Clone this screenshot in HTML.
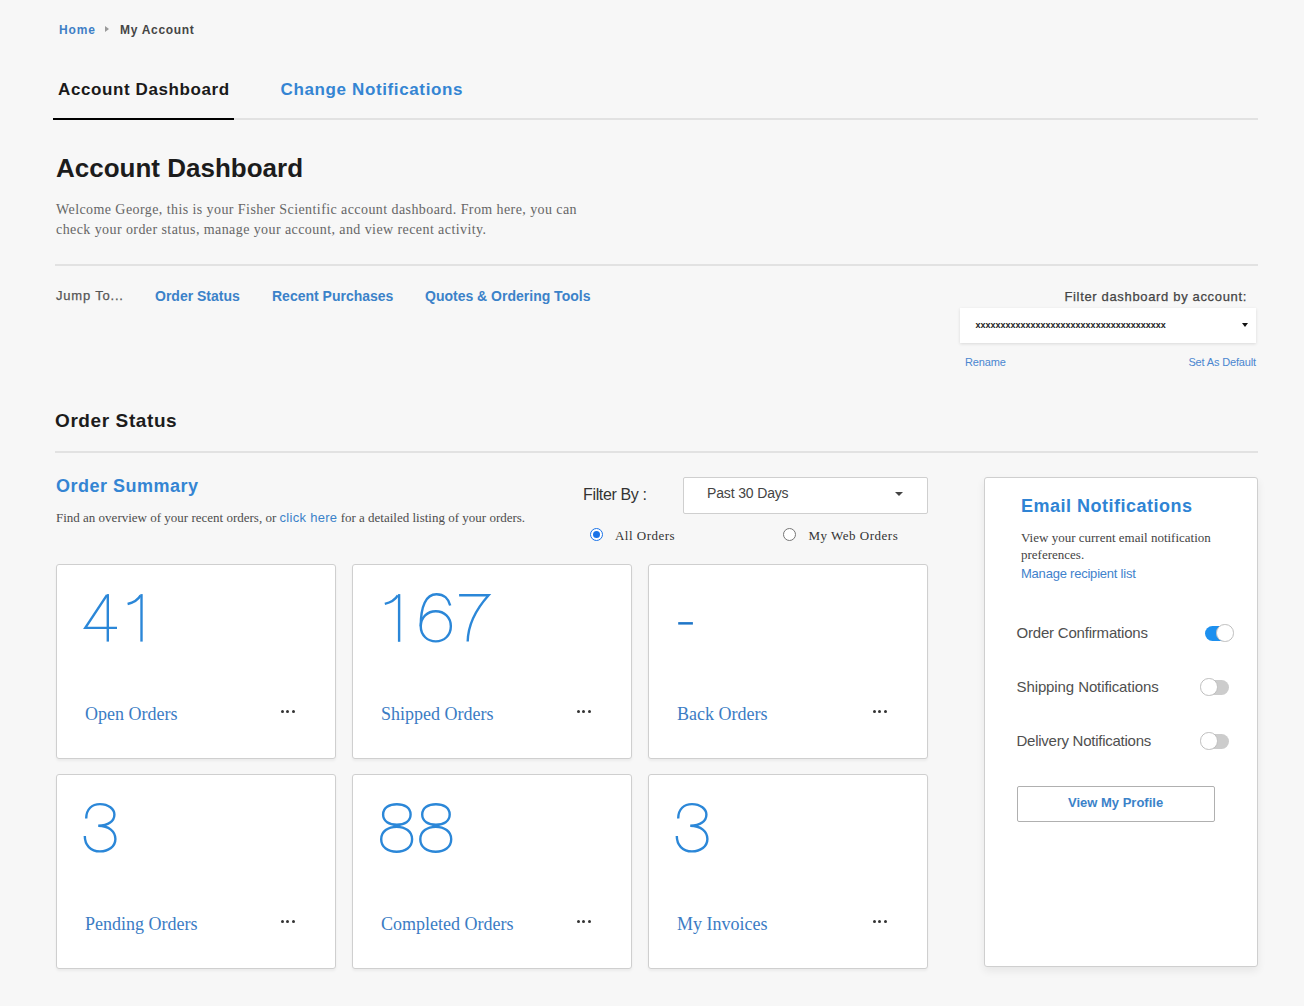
<!DOCTYPE html>
<html><head><meta charset="utf-8">
<style>
*{box-sizing:border-box;margin:0;padding:0}
html,body{width:1304px;height:1006px;overflow:hidden;background:#f7f7f7;font-family:"Liberation Sans",sans-serif;color:#222}
.a{position:absolute;white-space:nowrap;line-height:1}
.serif{font-family:"Liberation Serif",serif}
.line{position:absolute;background:#e2e2e2}
.card{position:absolute;background:#fff;border:1px solid #cfcfcf;border-radius:3px;box-shadow:0 2px 3px rgba(0,0,0,.05);width:280px;height:195px}
.card .lbl{position:absolute;left:28px;top:139.9px;line-height:1;white-space:nowrap;font-family:"Liberation Serif",serif;font-size:18px;color:#3b7cc4}
.card .dots i{position:absolute;top:144.8px;margin-left:-.5px;width:3px;height:3px;border-radius:50%;background:#333}
.tog{position:absolute;width:27px;height:15px;border-radius:8px;background:#cccccc}
.knob{position:absolute;width:17.5px;height:17.5px;border-radius:50%;background:#fff;border:1px solid #bfbfbf}
</style></head><body>
<!-- breadcrumb -->
<div class="a" style="left:59px;top:23.6px;font-size:12px;font-weight:bold;letter-spacing:.9px;color:#3f7fc6">Home</div>
<div class="a" style="left:105px;top:26px;width:0;height:0;border-left:4.5px solid #9a9a9a;border-top:3px solid transparent;border-bottom:3px solid transparent"></div>
<div class="a" style="left:120px;top:23.6px;font-size:12px;font-weight:bold;letter-spacing:.7px;color:#454545">My Account</div>

<!-- tabs -->
<div class="a" style="left:58px;top:81px;font-size:17px;font-weight:bold;letter-spacing:.6px;color:#1a1a1a">Account Dashboard</div>
<div class="a" style="left:280.5px;top:80.5px;font-size:17px;font-weight:bold;letter-spacing:.63px;color:#3485d3">Change Notifications</div>
<div class="line" style="left:234px;top:118px;width:1024px;height:2px;background:#e2e2e2"></div>
<div class="line" style="left:53px;top:118px;width:181px;height:2px;background:#000"></div>

<div class="a" style="left:56px;top:155.4px;font-size:26px;font-weight:bold;color:#1c1c1c">Account Dashboard</div>
<div class="a serif" style="left:56px;top:200.4px;font-size:14px;line-height:20px;letter-spacing:.42px;color:#666">Welcome George, this is your Fisher Scientific account dashboard. From here, you can<br>check your order status, manage your account, and view recent activity.</div>
<div class="line" style="left:55px;top:264px;width:1203px;height:2px"></div>

<!-- jump to -->
<div class="a" style="left:56px;top:289px;font-size:13px;letter-spacing:.8px;color:#555;-webkit-text-stroke:.25px #555">Jump To...</div>
<div class="a" style="left:155px;top:288.6px;font-size:14px;font-weight:bold;color:#3b82c9">Order Status</div>
<div class="a" style="left:272px;top:288.6px;font-size:14px;font-weight:bold;color:#3b82c9">Recent Purchases</div>
<div class="a" style="left:425px;top:288.6px;font-size:14px;font-weight:bold;color:#3b82c9">Quotes &amp; Ordering Tools</div>

<div class="a" style="right:57px;top:289.8px;font-size:13px;letter-spacing:.66px;color:#444;-webkit-text-stroke:.25px #444">Filter dashboard by account:</div>
<div class="a" style="left:960px;top:308px;width:296px;height:35px;background:#fff;box-shadow:0 1px 3px rgba(0,0,0,.12)">
  <span class="a" style="left:15.5px;top:13px;font-size:9px;font-weight:bold;color:#222">xxxxxxxxxxxxxxxxxxxxxxxxxxxxxxxxxxxxxx</span>
  <span class="a" style="left:282px;top:14.5px;width:0;height:0;border-top:4px solid #111;border-left:3px solid transparent;border-right:3px solid transparent"></span>
</div>
<div class="a" style="left:965px;top:356.5px;font-size:11px;letter-spacing:-.15px;color:#4a86d0">Rename</div>
<div class="a" style="right:48px;top:356.5px;font-size:11px;letter-spacing:-.15px;color:#4a86d0">Set As Default</div>

<!-- order status -->
<div class="a" style="left:55px;top:410.7px;font-size:19px;font-weight:bold;letter-spacing:.6px;color:#1c1c1c">Order Status</div>
<div class="line" style="left:55px;top:451px;width:1203px;height:2px"></div>

<div class="a" style="left:56px;top:476.6px;font-size:18px;font-weight:bold;letter-spacing:.5px;color:#3485d3">Order Summary</div>
<div class="a serif" style="left:56px;top:511.1px;font-size:13px;color:#4d4d4d">Find an overview of your recent orders, or <span style="font-family:'Liberation Sans',sans-serif;letter-spacing:.3px;color:#3b82c9">click here</span> for a detailed listing of your orders.</div>

<div class="a" style="left:583px;top:486.9px;font-size:16px;letter-spacing:-.35px;color:#333">Filter By :</div>
<div class="a" style="left:683px;top:477px;width:245px;height:37px;background:#fff;border:1px solid #cfcfcf;border-radius:2px">
  <span class="a" style="left:23px;top:8.25px;font-size:14px;letter-spacing:-.15px;color:#444">Past 30 Days</span>
  <span class="a" style="left:210.5px;top:14px;width:0;height:0;border-top:4px solid #444;border-left:4px solid transparent;border-right:4px solid transparent"></span>
</div>
<div class="a" style="left:590px;top:528px;width:13px;height:13px;border-radius:50%;border:1.5px solid #1a73e8;background:#fff"><i style="position:absolute;left:1.5px;top:1.5px;width:7px;height:7px;border-radius:50%;background:#1a73e8"></i></div>
<div class="a serif" style="left:615px;top:528.9px;font-size:13px;color:#333;letter-spacing:.48px">All Orders</div>
<div class="a" style="left:783px;top:528px;width:13px;height:13px;border-radius:50%;border:1px solid #767676;background:#fff"></div>
<div class="a serif" style="left:808.5px;top:529.1px;font-size:13px;color:#333;letter-spacing:.5px">My Web Orders</div>

<!-- cards -->
<div class="card" style="left:56px;top:564px"><div class="lbl">Open Orders</div><div class="dots"><i style="left:224.8px"></i><i style="left:229.9px"></i><i style="left:235px"></i></div></div>
<div class="card" style="left:352px;top:564px"><div class="lbl">Shipped Orders</div><div class="dots"><i style="left:224.8px"></i><i style="left:229.9px"></i><i style="left:235px"></i></div></div>
<div class="card" style="left:648px;top:564px"><div class="lbl">Back Orders</div><div class="dots"><i style="left:224.8px"></i><i style="left:229.9px"></i><i style="left:235px"></i></div></div>
<div class="card" style="left:56px;top:774px"><div class="lbl">Pending Orders</div><div class="dots"><i style="left:224.8px"></i><i style="left:229.9px"></i><i style="left:235px"></i></div></div>
<div class="card" style="left:352px;top:774px"><div class="lbl">Completed Orders</div><div class="dots"><i style="left:224.8px"></i><i style="left:229.9px"></i><i style="left:235px"></i></div></div>
<div class="card" style="left:648px;top:774px"><div class="lbl">My Invoices</div><div class="dots"><i style="left:224.8px"></i><i style="left:229.9px"></i><i style="left:235px"></i></div></div>

<!-- big numbers -->
<svg class="a" style="left:0;top:0" width="1304" height="1006" viewBox="0 0 1304 1006">
 <g fill="none" stroke="#2b87d8" stroke-width="2.4" stroke-linecap="butt" stroke-linejoin="miter">
  <path d="M107.8 594.1 V641.6"/>
  <path d="M106.9 595.2 L85.3 627.9 H117"/>
  <path d="M127.6 604 C133.5 602.6 138 600 140.6 595.4"/><path d="M141.5 594.1 V641.6"/>
  <path d="M384.8 603.9 C390.7 602.5 395.2 599.9 397.8 595.4"/><path d="M399.1 594.1 V641.8"/>
  <path d="M420.75 626.35 C420.75 617.32 427.49 611.30 435.80 611.30 C444.11 611.30 450.85 617.32 450.85 626.35 C450.85 635.38 444.11 641.40 435.80 641.40 C427.49 641.40 420.75 635.38 420.75 626.35 Z"/>
  <path d="M420.75 626.35 C420.7 606 426 594.3 436.5 594.3 C444 594.3 448.8 599 450.2 605.6"/>
  <path d="M459.1 595.2 H488.6 C478 607 468 622 467.7 641.6"/>
  <rect x="678.2" y="622.1" width="14.7" height="2.5" fill="#1f76c8" stroke="none"/>
  <path d="M86.2 818.5 C86.2 809 92 804.1 100 804.1 C108.5 804.1 114.4 809 114.4 814.5 C114.4 821 108.5 825.8 98.2 825.8 C109 825.8 115.4 831.5 115.4 839 C115.4 846.5 108.5 851.4 100 851.4 C90.5 851.4 84.8 845 84.8 836"/>
  <path transform="translate(592 0)" d="M86.2 818.5 C86.2 809 92 804.1 100 804.1 C108.5 804.1 114.4 809 114.4 814.5 C114.4 821 108.5 825.8 98.2 825.8 C109 825.8 115.4 831.5 115.4 839 C115.4 846.5 108.5 851.4 100 851.4 C90.5 851.4 84.8 845 84.8 836"/>
  <path d="M383.10 814.50 C383.10 807.70 389.26 804.20 396.85 804.20 C404.44 804.20 410.60 807.70 410.60 814.50 C410.60 821.30 404.44 824.80 396.85 824.80 C389.26 824.80 383.10 821.30 383.10 814.50 Z"/>
  <path d="M381.20 839.30 C381.20 831.12 388.12 826.90 396.65 826.90 C405.18 826.90 412.10 831.12 412.10 839.30 C412.10 847.48 405.18 851.70 396.65 851.70 C388.12 851.70 381.20 847.48 381.20 839.30 Z"/>
  <path d="M422.20 814.50 C422.20 807.70 428.36 804.20 435.95 804.20 C443.54 804.20 449.70 807.70 449.70 814.50 C449.70 821.30 443.54 824.80 435.95 824.80 C428.36 824.80 422.20 821.30 422.20 814.50 Z"/>
  <path d="M420.30 839.30 C420.30 831.12 427.22 826.90 435.75 826.90 C444.28 826.90 451.20 831.12 451.20 839.30 C451.20 847.48 444.28 851.70 435.75 851.70 C427.22 851.70 420.30 847.48 420.30 839.30 Z"/>
 </g>
</svg>

<!-- email panel -->
<div class="a" style="left:984px;top:477px;width:274px;height:490px;background:#fff;border:1px solid #cfcfcf;border-radius:3px;box-shadow:0 4px 8px rgba(0,0,0,.07)"></div>
<div class="a" style="left:1021px;top:496.8px;font-size:18px;font-weight:bold;letter-spacing:.5px;color:#2f84d4">Email Notifications</div>
<div class="a serif" style="left:1021px;top:529.1px;font-size:13px;line-height:17px;color:#444">View your current email notification<br>preferences.</div>
<div class="a" style="left:1021px;top:566.7px;font-size:13px;letter-spacing:-.22px;color:#3f82cc">Manage recipient list</div>

<div class="a" style="left:1016.5px;top:625.3px;font-size:15px;letter-spacing:-.2px;color:#4f4f4f">Order Confirmations</div>
<div class="tog" style="left:1205px;top:626px;background:#1d90ef"></div>
<div class="knob" style="left:1216px;top:624px"></div>
<div class="a" style="left:1016.5px;top:679.2px;font-size:15px;letter-spacing:-.1px;color:#4f4f4f">Shipping Notifications</div>
<div class="tog" style="left:1202px;top:680px"></div>
<div class="knob" style="left:1200px;top:678px"></div>
<div class="a" style="left:1016.5px;top:732.9px;font-size:15px;letter-spacing:-.25px;color:#4f4f4f">Delivery Notifications</div>
<div class="tog" style="left:1202px;top:734px"></div>
<div class="knob" style="left:1200px;top:732px"></div>

<div class="a" style="left:1017px;top:786px;width:198px;height:36px;border:1px solid #b0b0b0;border-radius:2px;background:#fff"></div>
<div class="a" style="left:1068px;top:795.8px;font-size:13px;font-weight:bold;color:#3b82c9">View My Profile</div>
</body></html>
